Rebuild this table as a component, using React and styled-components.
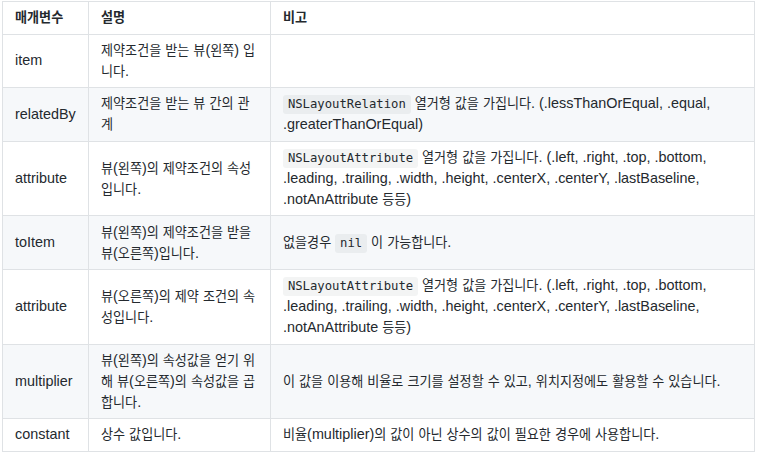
import React from "react";
import styled, { createGlobalStyle } from "styled-components";

const GlobalStyle = createGlobalStyle`
  body {
    margin: 0;
    background: #fff;
  }
`;

const Page = styled.div`
  padding: 1px 5px 0 2px;
`;

const Table = styled.table`
  width: 753px;
  table-layout: fixed;
  border-collapse: collapse;
  border-spacing: 0;
  font-family: "Liberation Sans", Arial, "Noto Sans CJK KR", sans-serif;
  font-size: 14.4px;
  line-height: 21px;
  color: #24292e;
`;

const Row = styled.tr`
  background: ${(props) => (props.$striped ? "#f6f8fa" : "#fff")};
  border-top: 1px solid #c6cbd1;
`;

const Head = styled.th`
  padding: 5.3px 12px;
  border: 1px solid #dfe2e5;
  text-align: left;
  font-weight: 700;
`;

const Cell = styled.td`
  padding: 5.3px 12px;
  border: 1px solid #dfe2e5;
  vertical-align: middle;
`;

const Hangul = styled.span`
  font-family: "Noto Sans CJK KR", sans-serif;
  font-size: 13.1px;
  line-height: 1;
`;

const Code = styled.code`
  font-family: "DejaVu Sans Mono", "Liberation Mono", monospace;
  font-size: 85%;
  line-height: 1;
  padding: 0.2em 0.4em;
  margin: 0;
  background: rgba(27, 31, 35, 0.05);
  border-radius: 3px;
`;

// wrap hangul runs so they get the narrower korean size
const ko = (text) =>
  text
    .split(/([\uAC00-\uD7A3]+)/)
    .map((part, i) =>
      /[\uAC00-\uD7A3]/.test(part) ? <Hangul key={i}>{part}</Hangul> : part
    );

const attrNote = (
  <>
    <Code>NSLayoutAttribute</Code>{" "}
    {ko(
      "열거형 값을 가집니다. (.left, .right, .top, .bottom, .leading, .trailing, .width, .height, .centerX, .centerY, .lastBaseline, .notAnAttribute 등등)"
    )}
  </>
);

const rows = [
  { param: "item", desc: "제약조건을 받는 뷰(왼쪽) 입니다.", note: null },
  {
    param: "relatedBy",
    desc: "제약조건을 받는 뷰 간의 관계",
    note: (
      <>
        <Code>NSLayoutRelation</Code>{" "}
        {ko("열거형 값을 가집니다. (.lessThanOrEqual, .equal, .greaterThanOrEqual)")}
      </>
    ),
  },
  { param: "attribute", desc: "뷰(왼쪽)의 제약조건의 속성 입니다.", note: attrNote },
  {
    param: "toItem",
    desc: "뷰(왼쪽)의 제약조건을 받을 뷰(오른쪽)입니다.",
    note: (
      <>
        {ko("없을경우 ")}
        <Code>nil</Code>
        {ko(" 이 가능합니다.")}
      </>
    ),
  },
  { param: "attribute", desc: "뷰(오른쪽)의 제약 조건의 속성입니다.", note: attrNote },
  {
    param: "multiplier",
    desc: "뷰(왼쪽)의 속성값을 얻기 위해 뷰(오른쪽)의 속성값을 곱합니다.",
    note: ko("이 값을 이용해 비율로 크기를 설정할 수 있고, 위치지정에도 활용할 수 있습니다."),
  },
  {
    param: "constant",
    desc: "상수 값입니다.",
    note: ko("비율(multiplier)의 값이 아닌 상수의 값이 필요한 경우에 사용합니다."),
  },
];

const App = () => {
  return (
    <Page>
      <GlobalStyle />
      <Table>
        <colgroup>
          <col style={{ width: 86 }} />
          <col style={{ width: 182 }} />
          <col />
        </colgroup>
        <thead>
          <Row>
            <Head>{ko("매개변수")}</Head>
            <Head>{ko("설명")}</Head>
            <Head>{ko("비고")}</Head>
          </Row>
        </thead>
        <tbody>
          {rows.map((row, i) => (
            <Row key={i} $striped={i % 2 === 1}>
              <Cell>{row.param}</Cell>
              <Cell>{ko(row.desc)}</Cell>
              <Cell>{row.note}</Cell>
            </Row>
          ))}
        </tbody>
      </Table>
    </Page>
  );
};

export default App;
